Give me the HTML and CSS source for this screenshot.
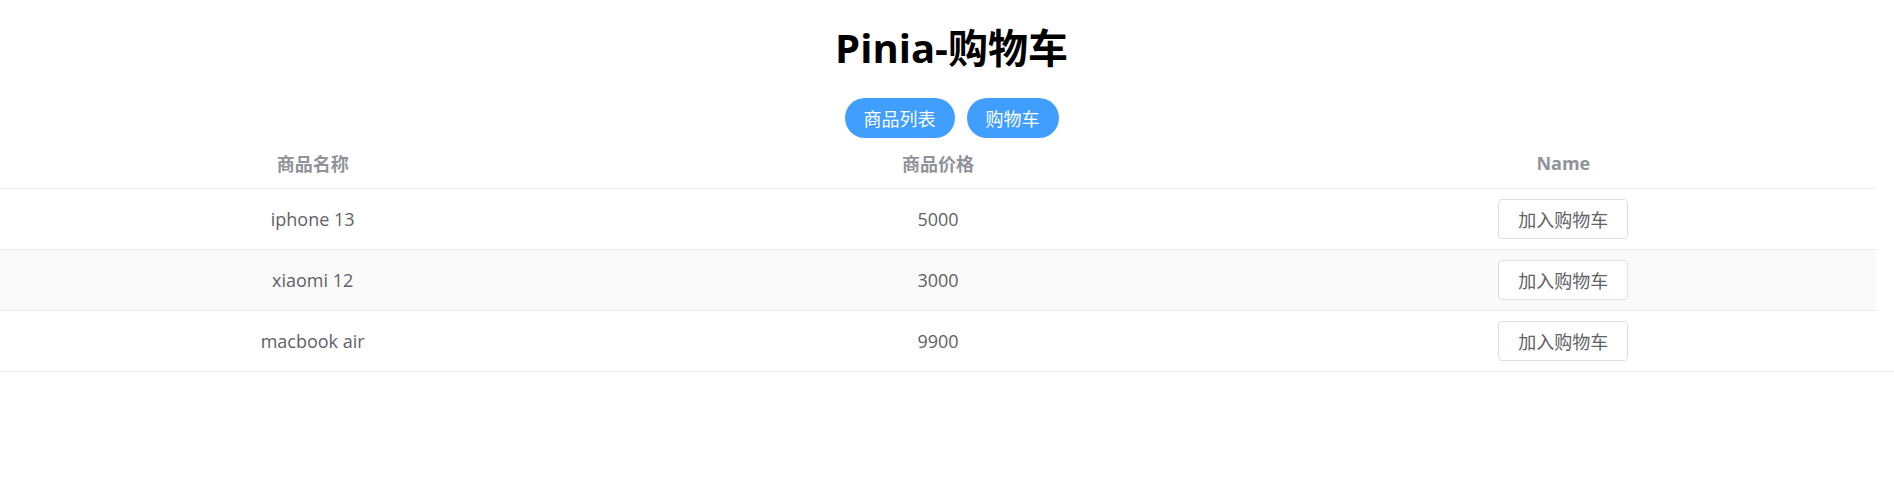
FILE: index.html
```html
<!DOCTYPE html>
<html>
<head>
  <meta http-equiv="Content-Type" content="text/html; charset=utf-8" />
  <title>Pinia-购物车</title>
<link rel="stylesheet" href="styles.css">
</head>
<body>

<div class="header">
  <h1 class="title">Pinia-购物车</h1>
  <div class="nav">
    <button class="nav-btn">商品列表</button>
    <button class="nav-btn">购物车</button>
  </div>
</div>

<div class="table-wrap">
  <table class="goods">
    <thead>
      <tr>
        <th>商品名称</th>
        <th>商品价格</th>
        <th>Name</th>
      </tr>
    </thead>
    <tbody>
      <tr>
        <td>iphone 13</td>
        <td>5000</td>
        <td><button class="add-btn">加入购物车</button></td>
      </tr>
      <tr>
        <td>xiaomi 12</td>
        <td>3000</td>
        <td><button class="add-btn">加入购物车</button></td>
      </tr>
      <tr>
        <td>macbook air</td>
        <td>9900</td>
        <td><button class="add-btn">加入购物车</button></td>
      </tr>
    </tbody>
  </table>
</div>

</body>
</html>
```

FILE: styles.css
```css
body {
  margin: 0;
  font-family: "Open Sans", "Noto Sans CJK SC", sans-serif;
  font-size: 18px;
  color: #606266;
  background: #fff;
}

.header {
  padding-left: 9px;
  text-align: center;
}

.title {
  margin: 18px 0 0;
  font-size: 40px;
  line-height: 60px;
  font-weight: bold;
  color: #000;
}

.nav {
  display: flex;
  justify-content: center;
  gap: 12px;
  margin-top: 20px;
}

.nav-btn {
  height: 40px;
  padding: 0 19px;
  border: none;
  border-radius: 20px;
  background-color: #409eff;
  color: #fff;
  font-family: inherit;
  font-size: 18px;
}

.table-wrap {
  border-bottom: 1px solid #ebeef5;
}

table.goods {
  width: calc(100% - 18px);
  border-collapse: collapse;
  table-layout: fixed;
}

table.goods th, table.goods td {
  padding: 0;
  text-align: center;
  border-bottom: 1px solid #ebeef5;
}

table.goods th {
  height: 50px;
  color: #909399;
  font-weight: bold;
}

table.goods td {
  height: 60px;
}

table.goods tbody tr:nth-child(even) {
  background-color: #fafafa;
}

table.goods tbody tr:last-child td {
  border-bottom: none;
}

.add-btn {
  height: 40px;
  padding: 0 19px;
  border: 1px solid #dcdfe6;
  border-radius: 4px;
  background-color: #fff;
  color: #606266;
  font-family: inherit;
  font-size: 18px;
  vertical-align: middle;
}
```
